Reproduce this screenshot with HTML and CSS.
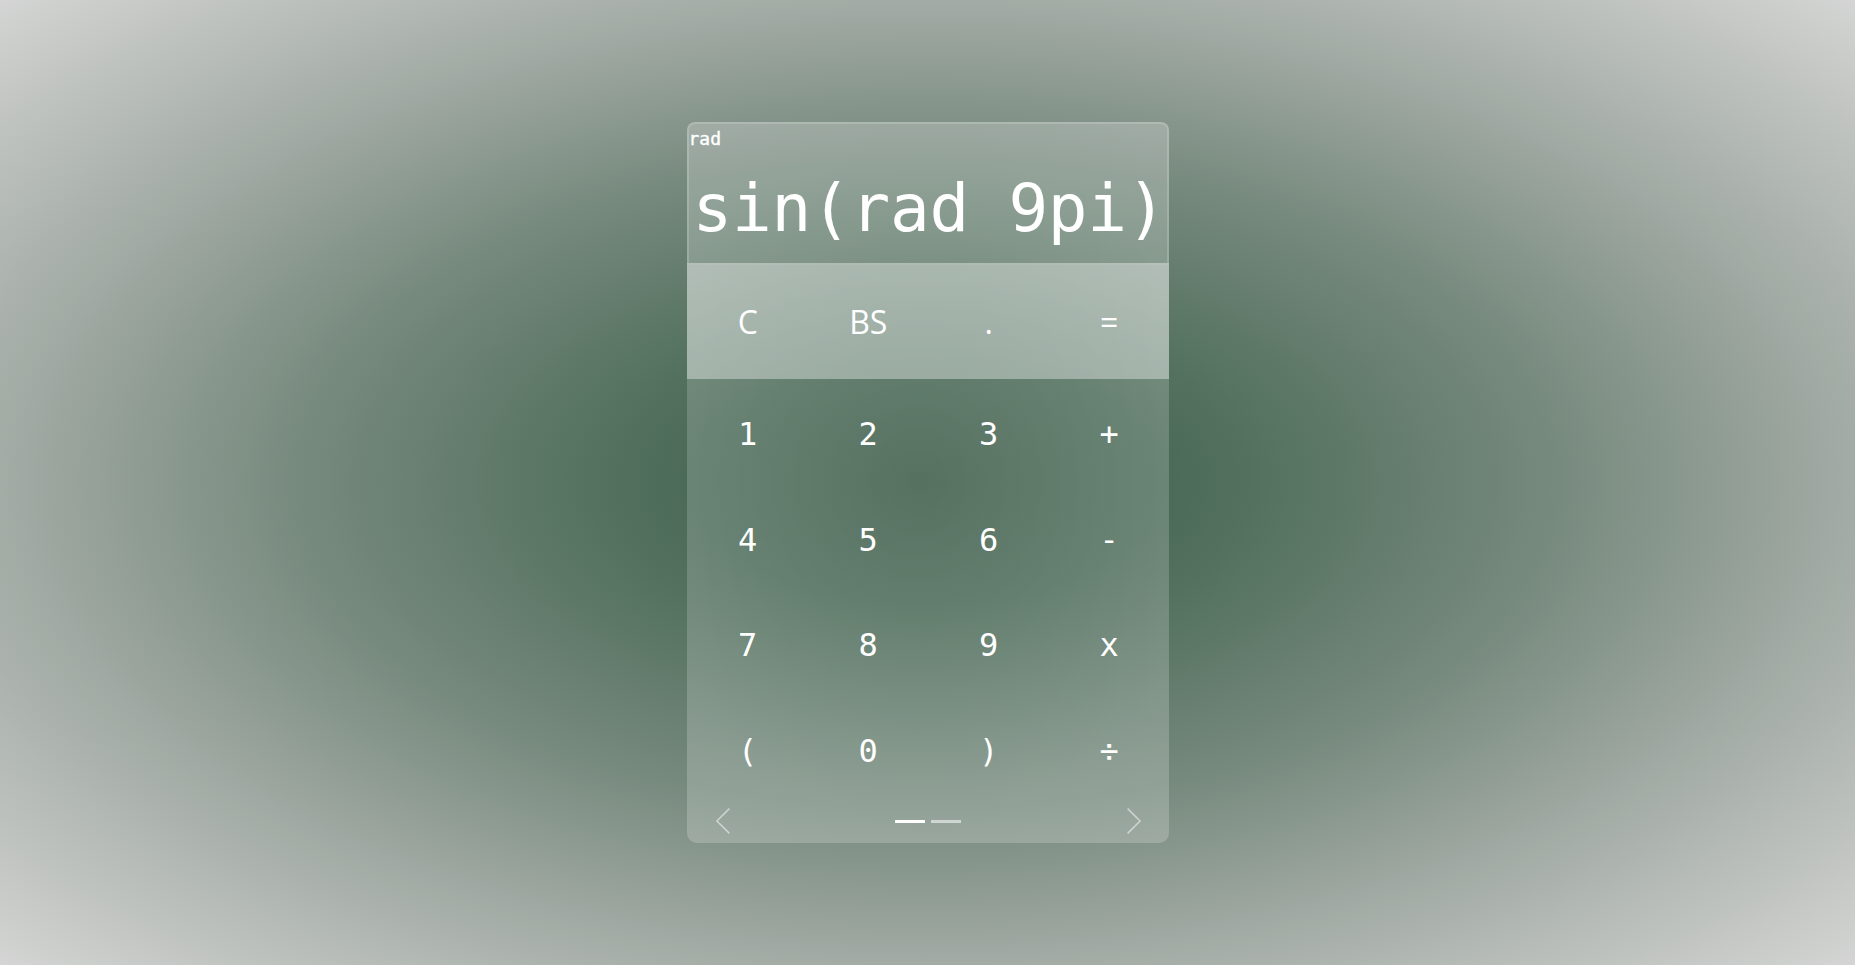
FILE: index.html
```html
<!DOCTYPE html>
<html lang="en">
<head>
<meta charset="utf-8">
<title>Calculator</title>
<link rel="stylesheet" href="styles.css">
</head>
<body>
<main class="stage">
  <section class="calc">
    <div class="display">
      <div class="mode">rad</div>
      <div class="expr">sin(rad 9pi)</div>
    </div>
    <div class="row-top">
      <button class="key key-fn">C</button>
      <button class="key key-fn">BS</button>
      <button class="key key-fn">.</button>
      <button class="key key-fn">=</button>
    </div>
    <div class="keys">
      <button class="key">1</button>
      <button class="key">2</button>
      <button class="key">3</button>
      <button class="key">+</button>
      <button class="key">4</button>
      <button class="key">5</button>
      <button class="key">6</button>
      <button class="key">-</button>
      <button class="key">7</button>
      <button class="key">8</button>
      <button class="key">9</button>
      <button class="key">x</button>
      <button class="key">(</button>
      <button class="key">0</button>
      <button class="key">)</button>
      <button class="key">÷</button>
    </div>
    <div class="nav">
      <svg class="chev" width="14" height="26" viewBox="0 0 14 26"><path d="M13.4 0.6 L0.9 13 L13.4 25.4" fill="none" stroke="rgba(255,255,255,0.5)" stroke-width="1.6"/></svg>
      <div class="pager">
        <span class="dash dash-on"></span>
        <span class="dash"></span>
      </div>
      <svg class="chev" width="14" height="26" viewBox="0 0 14 26"><path d="M0.6 0.6 L13.1 13 L0.6 25.4" fill="none" stroke="rgba(255,255,255,0.5)" stroke-width="1.6"/></svg>
    </div>
  </section>
</main>
</body>
</html>
```
FILE: styles.css
```css
html, body {
  margin: 0;
  padding: 0;
  height: 100%;
}

body {
  background: radial-gradient(ellipse farthest-corner at 50% 50%,
    #466351 0%,
    #4b6a58 18%,
    #587463 28%,
    #778a7e 48%,
    #a4aca6 71%,
    #d4d5d4 100%);
  font-family: "DejaVu Sans Mono", "Liberation Mono", monospace;
  color: #ffffff;
  overflow: hidden;
}

.stage {
  height: 100%;
  display: flex;
  align-items: center;
  justify-content: center;
}

.calc {
  width: 482px;
  height: 721px;
  display: flex;
  flex-direction: column;
  border-radius: 8px 8px 10px 10px;
  overflow: hidden;
  background: radial-gradient(ellipse 320px 330px at 48% 50%,
    rgba(255, 255, 255, 0.09) 0%,
    rgba(255, 255, 255, 0.2) 100%);
}

.display {
  box-sizing: border-box;
  height: 141px;
  flex: none;
  border: 2px solid rgba(255, 255, 255, 0.17);
  border-bottom: none;
  border-radius: 8px 8px 0 0;
  background: rgba(255, 255, 255, 0.03);
  overflow: hidden;
  padding-top: 5px;
}

.mode {
  font-size: 18px;
  line-height: 20px;
  font-weight: 400;
  height: 20px;
  -webkit-text-stroke: 0.4px #ffffff;
}

.expr {
  margin-top: 21px;
  padding-left: 4px;
  font-size: 66px;
  letter-spacing: -0.25px;
  line-height: 78px;
  white-space: nowrap;
}

.row-top {
  height: 116px;
  flex: none;
  display: grid;
  grid-template-columns: repeat(4, 1fr);
  background: rgba(255, 255, 255, 0.37);
  box-shadow: inset 0 2px 0 rgba(255, 255, 255, 0.06);
}

.keys {
  flex: 1;
  display: grid;
  grid-template-columns: repeat(4, 1fr);
  grid-template-rows: repeat(4, 1fr);
}

.key {
  border: none;
  background: transparent;
  color: #ffffff;
  font-family: "DejaVu Sans Mono", "Liberation Mono", monospace;
  font-size: 32px;
  padding: 4px 0 0 2px;
  margin: 0;
  display: flex;
  align-items: center;
  justify-content: center;
}

.key-fn {
  font-family: "Open Sans", "Noto Sans", sans-serif;
  font-size: 32px;
  padding: 0 0 0 2px;
}

.nav {
  height: 41px;
  flex: none;
  display: flex;
  align-items: center;
  justify-content: space-between;
  padding: 0 28px 0 29px;
}

.chev {
  display: block;
  margin-top: -3px;
}

.pager {
  display: flex;
  gap: 6px;
  margin-top: -3px;
}

.dash {
  display: block;
  width: 30px;
  height: 3px;
  background: rgba(255, 255, 255, 0.55);
}

.dash-on {
  background: #ffffff;
}
```
